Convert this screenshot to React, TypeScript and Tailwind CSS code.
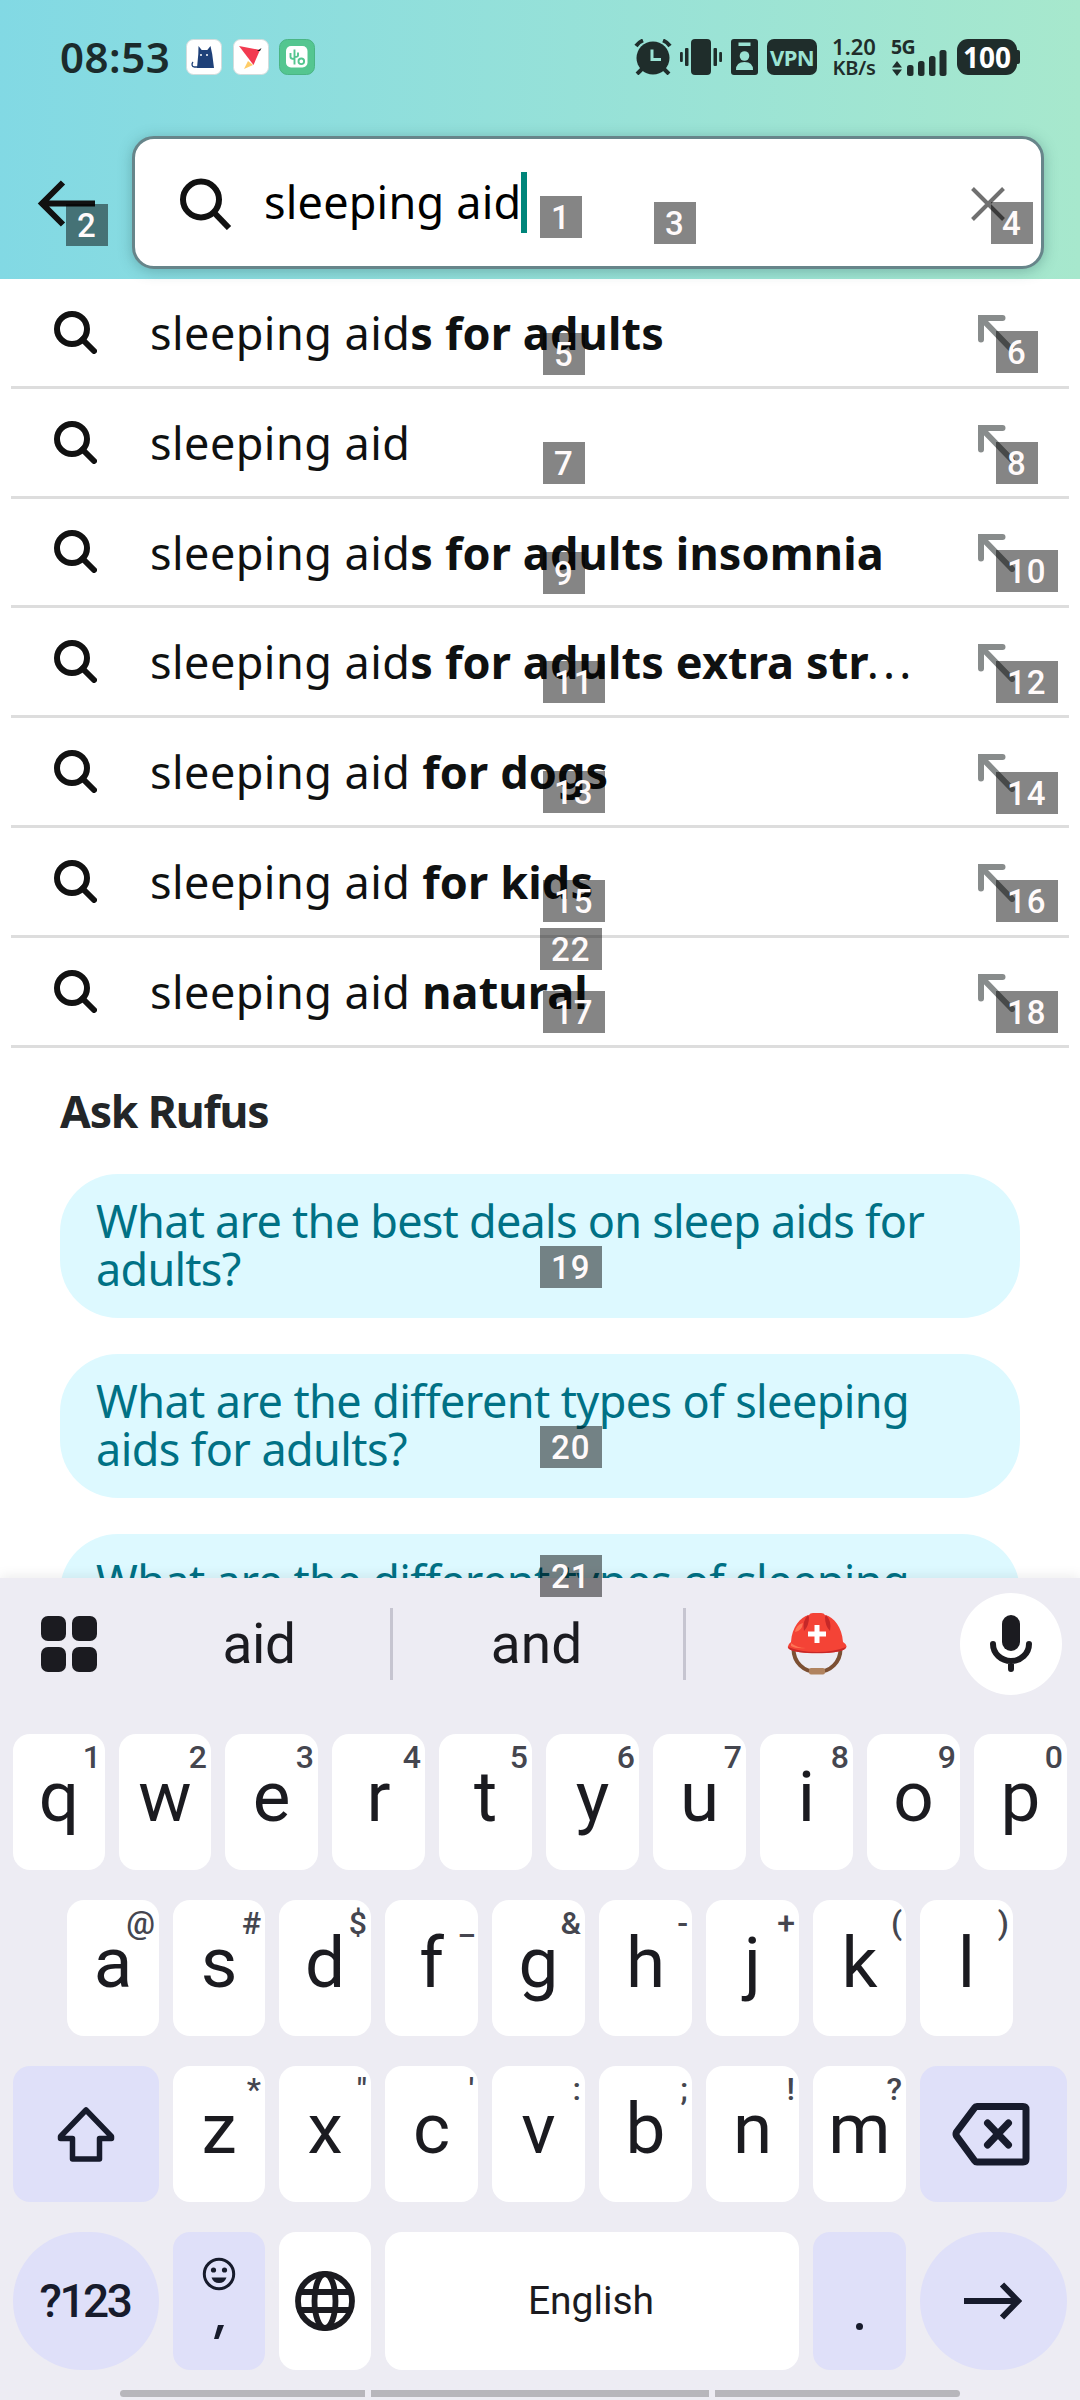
import type { ReactNode } from "react";

type Suggestion = { typed: string; rest: string; height: string; cut?: boolean };

const suggestions: Suggestion[] = [
  { typed: "sleeping aid", rest: "s for adults", height: "h-[110px]" },
  { typed: "sleeping aid", rest: "", height: "h-[110px]" },
  { typed: "sleeping aid", rest: "s for adults insomnia", height: "h-[109px]" },
  { typed: "sleeping aid", rest: "s for adults extra str", height: "h-[110px]", cut: true },
  { typed: "sleeping aid", rest: " for dogs", height: "h-[110px]" },
  { typed: "sleeping aid", rest: " for kids", height: "h-[110px]" },
  { typed: "sleeping aid", rest: " natural", height: "h-[110px]" },
];

const questions = [
  { lines: ["What are the best deals on sleep aids for", "adults?"], tracking: "tracking-[-0.75px]" },
  { lines: ["What are the different types of sleeping", "aids for adults?"], tracking: "tracking-[-0.6px]" },
  { lines: ["What are the different types of sleeping", "aids for adults?"], tracking: "tracking-[-0.6px]" },
];

const rowOne = [["q", "1"], ["w", "2"], ["e", "3"], ["r", "4"], ["t", "5"], ["y", "6"], ["u", "7"], ["i", "8"], ["o", "9"], ["p", "0"]];
const rowTwo = [["a", "@"], ["s", "#"], ["d", "$"], ["f", "_"], ["g", "&"], ["h", "-"], ["j", "+"], ["k", "("], ["l", ")"]];
const rowThree = [["z", "*"], ["x", "\""], ["c", "'"], ["v", ":"], ["b", ";"], ["n", "!"], ["m", "?"]];

const badges: [string, number, number][] = [
  ["1", 540, 196], ["2", 66, 204], ["3", 654, 202], ["4", 991, 202],
  ["5", 543, 333], ["6", 996, 331], ["7", 543, 442], ["8", 996, 442],
  ["9", 543, 552], ["10", 996, 550], ["11", 543, 661], ["12", 996, 661],
  ["13", 543, 771], ["14", 996, 772], ["15", 543, 880], ["16", 996, 880],
  ["17", 543, 991], ["18", 996, 991], ["19", 540, 1246], ["20", 540, 1426],
  ["21", 540, 1555], ["22", 540, 928],
];

function StatusBar() {
  return (
    <div className="flex h-[36px] items-center text-[#1f2d2b]">
      <span className="ml-[60px] w-[126px] text-[42px] font-semibold leading-[36px] tracking-[0.5px] text-[#1b2b2c]">08:53</span>
      <svg className="h-[36px] w-[36px]" viewBox="0 0 36 36">
        <rect x="0.5" y="0.5" width="35" height="35" rx="7" fill="#fff" stroke="#d3dcdc" />
        <path d="M12.500 7l3.200 4h5.600L24.500 7l1.700 8 1.800 14H11l1.300-14z" fill="#1f4179" />
        <path d="M12 28H8.500c-3 0-3-3.500-1.500-5" fill="none" stroke="#1f4179" strokeWidth="1.300" />
        <circle cx="15" cy="16" r="1" fill="#fff" /><circle cx="21" cy="16" r="1" fill="#fff" />
      </svg>
      <svg className="ml-[11px] h-[36px] w-[36px]" viewBox="0 0 36 36">
        <rect x="0.500" y="0.500" width="35" height="35" rx="7" fill="#fff" stroke="#d3dcdc" />
        <path d="M15 22l5 4-9 4z" fill="#fc6" />
        <path d="M6 7l21 4-6.500 15z" fill="#f23a50" />
        <path d="M24 12l4.500-3-1.500 3z" fill="#111" />
      </svg>
      <svg className="ml-[10px] h-[36px] w-[36px]" viewBox="0 0 36 36">
        <rect x="0.500" y="0.500" width="35" height="35" rx="8" fill="#54c690" stroke="#4ab584" />
        <rect x="7" y="7" width="21.500" height="21.500" rx="5" fill="#fff" />
        <path d="M15.500 10.500v15M11.500 14v4q0 2 4 2M19 13.500v3q0 1.500-3.500 1.500" fill="none" stroke="#54c690" strokeWidth="1.900" />
        <circle cx="22.300" cy="22.300" r="2.800" fill="none" stroke="#54c690" strokeWidth="1.900" />
      </svg>
      <div className="ml-[319px] flex items-center">
        <svg className="h-[36px] w-[38px]" viewBox="0 0 38 36" fill="none" stroke="#1f2d2b">
          <circle cx="19" cy="19" r="16.500" fill="#1f2d2b" stroke="none" />
          <path d="M2 7q3-4 7-5.500M36 7q-3-4-7-5.500" strokeWidth="4" />
          <path d="M8 30l-5 5M30 30l5 5" strokeWidth="4" />
          <path d="M18 10.500v10h9" stroke="#9be3d4" strokeWidth="3" />
        </svg>
        <svg className="ml-[8px] h-[36px] w-[42px]" viewBox="0 0 42 36" fill="#1f2d2b">
          <rect x="11" y="0" width="20" height="36" rx="4" /><rect x="5" y="9" width="3.500" height="18" rx="1" /><rect x="0" y="13" width="2.800" height="10" rx="1" />
          <rect x="33.500" y="9" width="3.500" height="18" rx="1" /><rect x="39.200" y="13" width="2.800" height="10" rx="1" />
        </svg>
        <svg className="ml-[9px] h-[36px] w-[27px]" viewBox="0 0 27 36">
          <rect width="27" height="36" rx="3" fill="#1f2d2b" />
          <rect x="7.500" y="3.500" width="12" height="3.500" fill="#9be3d4" />
          <circle cx="13.500" cy="17" r="4.800" fill="#9be3d4" />
          <path d="M5 31q0-8 8.500-8t8.500 8z" fill="#9be3d4" />
        </svg>
        <div className="ml-[9px] h-[36px] w-[50px] rounded-[7px] bg-[#1f2d2b] text-center text-[22px] font-bold leading-[36px] tracking-[-0.6px] text-[#9be3d4]">VPN</div>
        <div className="ml-[14px] w-[46px] text-center text-[22px] font-semibold leading-[22px]">
          <div>1.20</div>
          <div className="text-[20px] tracking-[-0.2px]">KB/s</div>
        </div>
        <div className="relative ml-[15px] h-[38px] w-[56px]">
          <span className="absolute -left-px -top-[2px] text-[19.500px] font-bold leading-[22px] tracking-[-0.6px]">5G</span>
          <svg className="h-[38px] w-[56px]" viewBox="0 0 56 38" fill="#1f2d2b">
            <path d="M0 29.500l5-6.500 5 6.500zM0 31.500h10l-5 6.500z" />
            <rect x="15" y="27" width="6.500" height="11" rx="2.500" /><rect x="26" y="23" width="6.500" height="15" rx="2.500" /><rect x="37" y="18" width="6.500" height="20" rx="2.500" /><rect x="47.500" y="12" width="7" height="26" rx="2.500" />
          </svg>
        </div>
        <div className="ml-[9px] h-[36px] w-[60px] rounded-[11px] bg-[#1f2d2b] text-center text-[28px] font-bold leading-[36px] text-white">100</div>
        <div className="h-[14px] w-[3px] rounded-r-[2px] bg-[#1f2d2b]" />
      </div>
    </div>
  );
}

function SearchHeader() {
  return (
    <div className="mt-[61px] flex items-center">
      <svg className="ml-[36px] h-[50px] w-[60px]" viewBox="0 0 60 50" fill="none" stroke="#111" strokeWidth="6">
        <path d="M59 25.500H6M27 4.500L6 25.500l21 21" />
      </svg>
      <div className="ml-[36px] flex h-[133px] w-[912px] items-center rounded-[22px] border-[3px] border-[#67858a] bg-white shadow-[0_2px_14px_rgba(40,90,90,0.35)]">
        <svg className="ml-[45px] h-[54px] w-[54px]" viewBox="0 0 54 54" fill="none" stroke="#111" strokeWidth="6">
          <circle cx="21" cy="23.500" r="18" />
          <path d="M34 36.500L49 52" />
        </svg>
        <div className="ml-[30px] -mt-[2px] text-[45px] tracking-[0.2px] text-black">sleeping aid</div>
        <div className="h-[61px] w-[6px] bg-[#00857a]" />
        <svg className="ml-auto mr-[36px] mt-[3px] h-[34px] w-[34px]" viewBox="0 0 34 34" stroke="#707070" strokeWidth="4">
          <path d="M1.500 1.500l31 31M32.500 1.500l-31 31" />
        </svg>
      </div>
    </div>
  );
}

function SuggestionRow({ typed, rest, height, cut }: Suggestion) {
  return (
    <div className={`mx-[11px] flex items-center border-b-[3px] border-[#dddddd] ${height}`}>
      <svg className="ml-[43px] -mt-[1px] h-[43px] w-[43px]" viewBox="0 0 43 43" fill="none" stroke="#111" strokeWidth="6">
        <circle cx="18" cy="18" r="15" />
        <path d="M28.500 28.500L40 40" strokeLinecap="round" />
      </svg>
      <div className="ml-[53px] whitespace-pre text-[45px] leading-[107px] tracking-[0.45px] text-[#0f1111]">
        {typed}
        <span className="font-bold tracking-[0.15px]">{rest}</span>
        {cut && <span className="-ml-[2px] tracking-[4.2px]">...</span>}
      </div>
      <svg className="ml-auto mr-[53px] mt-[2px] h-[38px] w-[38px]" viewBox="0 0 38 38" fill="none" stroke="#888c8c" strokeWidth="6">
        <path d="M24.500 3H3V24.500" strokeLinecap="round" />
        <path d="M4 4L34 35" strokeLinecap="round" />
        <path d="M0 0H6V6H0z" fill="#888c8c" stroke="none" />
      </svg>
    </div>
  );
}

function Key({ letter, hint, narrow }: { letter: string; hint: string; narrow: boolean }) {
  return (
    <div className={`relative h-[136px] rounded-[17px] bg-white text-center text-[71px] leading-[126px] text-[#1b1b20] ${narrow ? "w-[92px]" : "w-[93px]"}`}>
      {letter}
      <span className="absolute right-[4px] top-[4px] text-[32px] font-medium leading-[38px] text-[#45464f]">{hint}</span>
    </div>
  );
}

function ActionKey({ className, children }: { className: string; children: ReactNode }) {
  return <div className={`flex items-center justify-center bg-[#dfe0f9] text-[#171b2c] ${className}`}>{children}</div>;
}

function Helmet() {
  return (
    <svg className="h-[62px] w-[60px]" viewBox="0 0 60 62">
      <path d="M6.500 36c0 13 10 23 23.500 23s23.500-10 23.500-23" fill="none" stroke="#7c5033" strokeWidth="4" />
      <rect x="22" y="55" width="16" height="6.500" rx="2" fill="#b0835f" />
      <path d="M4 29C5 14 13 4 22 2q1-2 4-2h8q3 0 4 2c9 2 17 12 18 27q5 3 3 6c-5 7-53 7-58 0q-1-3 3-6z" fill="#f44336" />
      <path d="M1 34q12 5 29 5t29-5q-1 6-29 6T1 34z" fill="#c62828" />
      <path d="M21 2q-6 6-4 16 5-5 5-14zM39 2q6 6 4 16-5-5-5-14z" fill="#c62828" />
      <path d="M8 19q1-7 8-9-1 8-8 9zM4 30q6 5 15 5-10 1-15-2z" fill="#ff7555" />
      <path d="M27.500 12h5v6.500h6.500v5h-6.500V30h-5v-6.500H21v-5h6.500z" fill="#fff" />
    </svg>
  );
}

function Keyboard() {
  return (
    <div className="h-[822px] bg-[#edecf3] font-[Roboto,sans-serif] shadow-[0_-2px_12px_rgba(0,0,0,0.08)]">
      <div className="flex h-[132px] items-center">
        <div className="ml-[41px] grid w-[56px] grid-cols-2 gap-[6px]">
          <i className="h-[25px] rounded-[7px] bg-[#1b1b20]" /><i className="h-[25px] rounded-[7px] bg-[#1b1b20]" />
          <i className="h-[25px] rounded-[7px] bg-[#1b1b20]" /><i className="h-[25px] rounded-[7px] bg-[#1b1b20]" />
        </div>
        <div className="ml-[31px] w-[262px] text-center text-[55px] tracking-[-0.5px] text-[#1b1b20]">aid</div>
        <div className="h-[72px] w-[3px] bg-[#c6c5d0]" />
        <div className="w-[290px] pr-[3px] text-center text-[55px] text-[#1b1b20]">and</div>
        <div className="h-[72px] w-[3px] bg-[#c6c5d0]" />
        <div className="flex w-[262px] justify-center"><Helmet /></div>
        <div className="ml-[12px] flex h-[102px] w-[102px] items-center justify-center rounded-full bg-white">
          <svg className="h-[60px] w-[44px]" viewBox="0 0 44 60">
            <rect x="13" y="1" width="18" height="36" rx="9" fill="#1b1b20" />
            <path d="M4 30a18 17 0 0 0 36 0M22 47v8" fill="none" stroke="#1b1b20" strokeWidth="6" strokeLinecap="round" />
          </svg>
        </div>
      </div>
      <div className="mt-[24px] flex gap-[14px] pl-[13px]">
        {rowOne.map(([l, h], i) => <Key key={l} letter={l} hint={h} narrow={i < 2} />)}
      </div>
      <div className="mt-[30px] flex gap-[14px] pl-[67px]">
        {rowTwo.map(([l, h], i) => <Key key={l} letter={l} hint={h} narrow={i < 3} />)}
      </div>
      <div className="mt-[30px] flex gap-[14px] pl-[13px]">
        <ActionKey className="h-[136px] w-[146px] rounded-[17px]">
          <svg className="h-[58px] w-[60px]" viewBox="0 0 60 58" fill="none" stroke="#171b2c" strokeWidth="5.500" strokeLinejoin="round">
            <path d="M30 5L4.500 31.500v2H16.500V54h27V33.500H55.500v-2z" />
          </svg>
        </ActionKey>
        {rowThree.map(([l, h], i) => <Key key={l} letter={l} hint={h} narrow={i < 2} />)}
        <ActionKey className="h-[136px] w-[147px] rounded-[17px]">
          <svg className="-ml-[6px] h-[64px] w-[78px]" viewBox="0 0 78 64" fill="none" stroke="#171b2c" strokeWidth="7" strokeLinejoin="round">
            <path d="M25 4.500H71q3 0 3 3V57q0 3-3 3H25q-1.500 0-2.500-1.500L4.500 34q-1-2 0-4L22.500 6q1-1.500 2.500-1.500z" />
            <path d="M35.500 21l21 22M56.500 21l-21 22" strokeLinecap="round" />
          </svg>
        </ActionKey>
      </div>
      <div className="mt-[30px] flex gap-[14px] pl-[13px]">
        <ActionKey className="h-[138px] w-[146px] rounded-[70px] pr-[2px] text-[46px] font-medium tracking-[-2.500px]">?123</ActionKey>
        <ActionKey className="h-[138px] w-[92px] flex-col rounded-[17px]">
          <svg className="-mt-[5px] h-[34px] w-[34px]" viewBox="0 0 34 34" fill="#171b2c">
            <circle cx="17" cy="17" r="14.700" fill="none" stroke="#171b2c" strokeWidth="3" />
            <circle cx="11.500" cy="13" r="2.600" /><circle cx="22.500" cy="13" r="2.600" />
            <path d="M9.500 20.500h15q-2 5.500-7.500 5.500t-7.500-5.500z" />
          </svg>
          <svg className="mt-[33px] h-[16px] w-[12px]" viewBox="0 0 12 16"><path d="M5 1h6L5.500 15H1z" fill="#171b2c" /></svg>
        </ActionKey>
        <div className="flex h-[138px] w-[92px] items-center justify-center rounded-[17px] bg-white">
          <svg className="h-[60px] w-[60px]" viewBox="0 0 60 60" fill="none" stroke="#1b1b20" strokeWidth="5.800">
            <circle cx="30" cy="30" r="27" /><ellipse cx="30" cy="30" rx="10.500" ry="27" />
            <path d="M5 21h50M5 39h50" />
          </svg>
        </div>
        <div className="h-[138px] w-[414px] rounded-[17px] bg-white pr-[2px] text-center text-[39px] leading-[139px] text-[#1b1b20]">English</div>
        <ActionKey className="h-[138px] w-[93px] rounded-[17px]">
          <i className="mt-[50px] h-[7px] w-[7px] rounded-full bg-[#171b2c]" />
        </ActionKey>
        <ActionKey className="h-[138px] w-[147px] rounded-[70px]">
          <svg className="-ml-[2px] h-[40px] w-[58px]" viewBox="0 0 58 40" fill="none" stroke="#171b2c" strokeWidth="6">
            <path d="M0 20H53M38 3.500L54 20 38 36.500" />
          </svg>
        </ActionKey>
      </div>
      <div className="mt-[20px] flex justify-center gap-[6px]">
        <div className="h-[7px] w-[245px] rounded-l-full bg-[#b7b6bb]" />
        <div className="h-[7px] w-[338px] bg-[#b7b6bb]" />
        <div className="h-[7px] w-[245px] rounded-r-full bg-[#b7b6bb]" />
      </div>
    </div>
  );
}

export default function App() {
  return (
    <div className="relative flex h-[2400px] w-[1080px] flex-col overflow-hidden bg-white font-['Noto_Sans',sans-serif]">
      <div className="h-[279px] bg-linear-to-r from-[#82d9e4] to-[#a7e8cd] pt-[39px]">
        <StatusBar />
        <SearchHeader />
      </div>
      {suggestions.map((s, i) => <SuggestionRow key={i} {...s} />)}
      <div className="h-[530px] overflow-hidden px-[60px]">
        <div className="mt-[33px] text-[44.5px] font-bold leading-[60px] tracking-[-1.15px] text-[#232628]">Ask Rufus</div>
        <div className="mt-[33px] flex flex-col gap-[36px]">
          {questions.map((q, i) => (
            <div key={i} className={`h-[144px] shrink-0 rounded-[58px] bg-[#ddf9ff] pl-[36px] pt-[23px] text-[45px] leading-[48px] text-[#007185] ${q.tracking}`}>
              {q.lines.map((l) => <div key={l} className="whitespace-nowrap">{l}</div>)}
            </div>
          ))}
        </div>
      </div>
      <Keyboard />
      {badges.map(([n, x, y]) => (
        <div key={n} className="absolute h-[42px] bg-black/48 pl-[11px] font-[Roboto,sans-serif] text-[33px] font-medium leading-[43px] tracking-[1px] text-[#fffafa]" style={{ left: x, top: y, width: n.length * 20 + 22 }}>{n}</div>
      ))}
    </div>
  );
}
